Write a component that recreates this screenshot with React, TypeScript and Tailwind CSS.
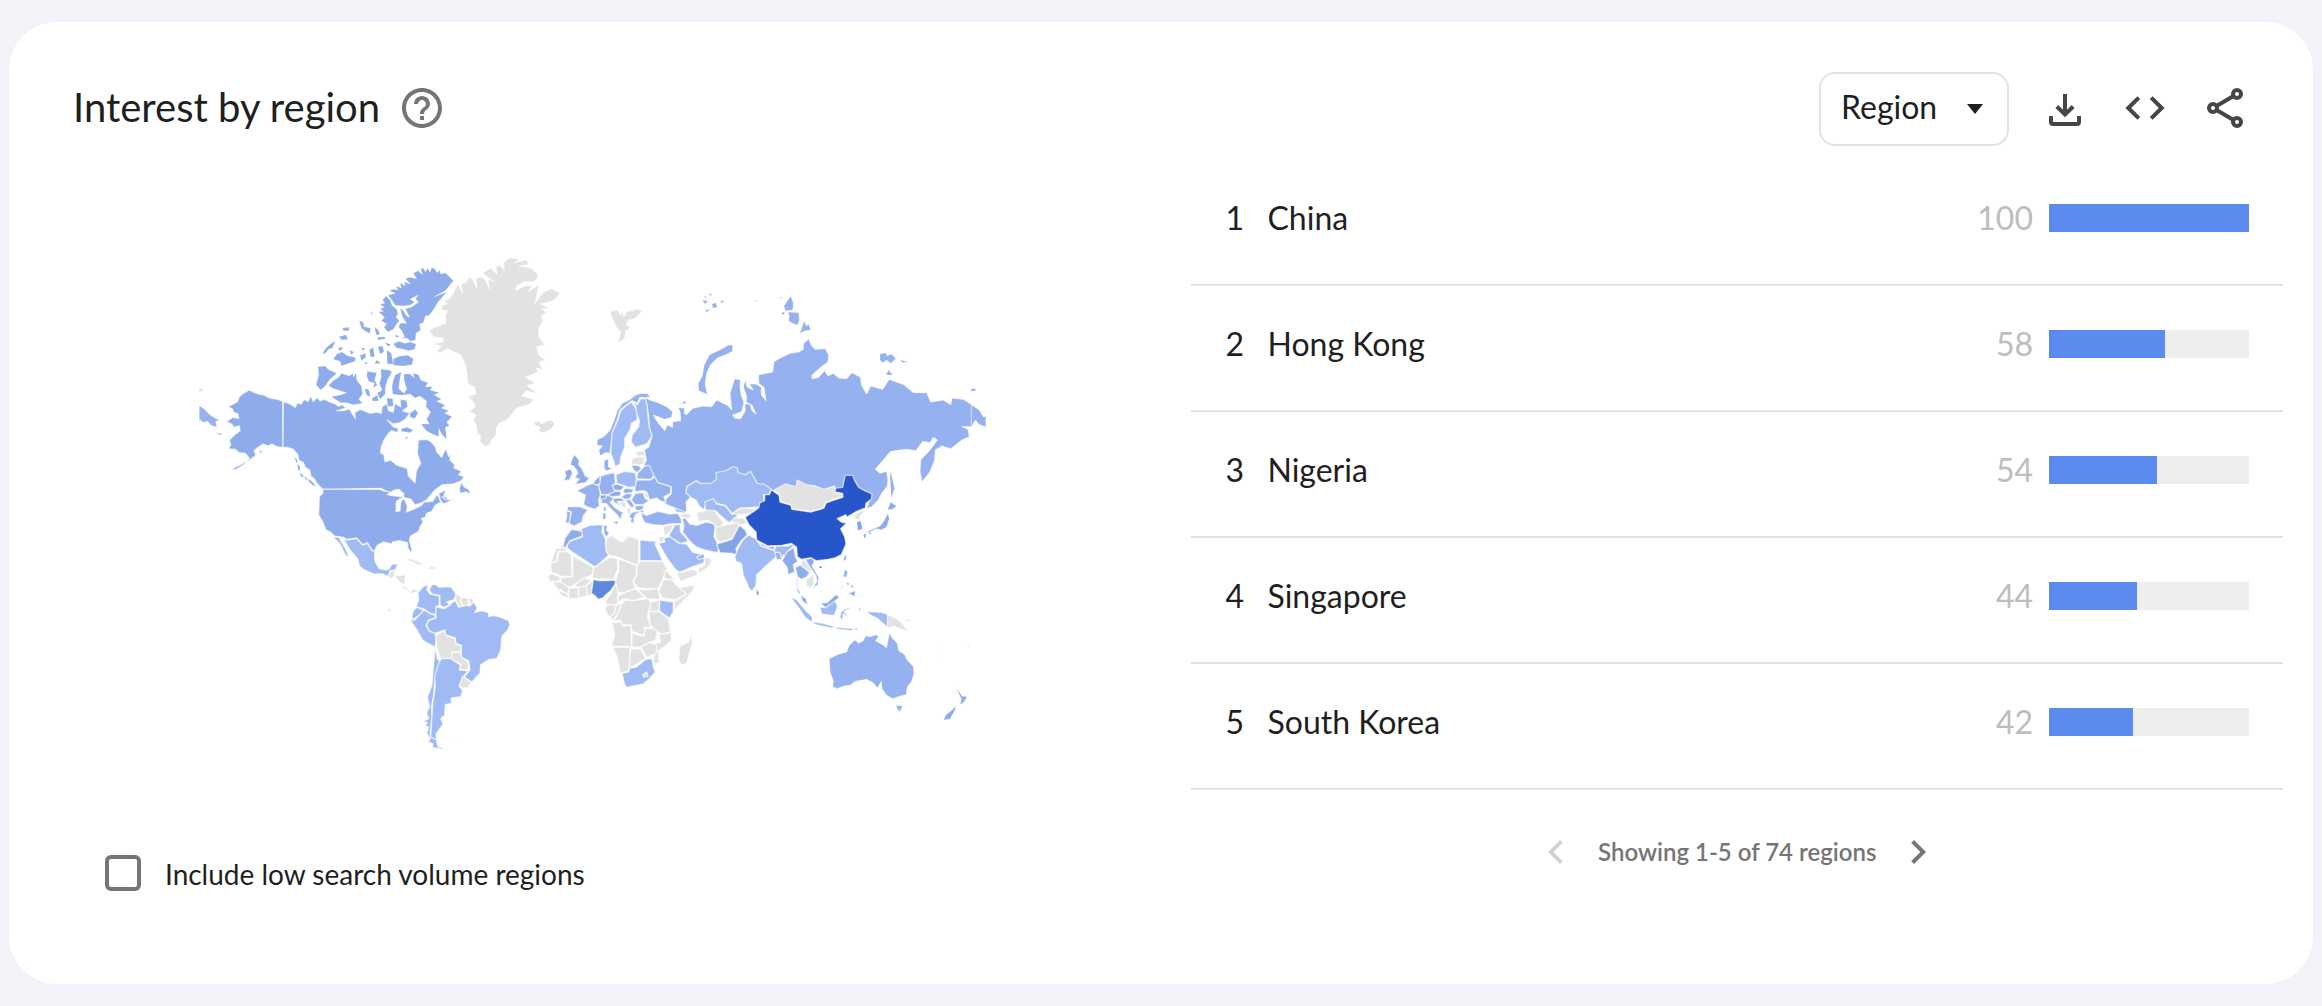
import { useState } from 'react';

type RegionRow = {
  rank: number;
  name: string;
  value: number;
};

type MapShape = {
  name: string;
  fill: string;
  d: string;
};

type MapArea = {
  id: string;
  offset: [number, number];
  border: number;
  shapes: MapShape[];
};

const ROWS: RegionRow[] = [
  { rank: 1, name: 'China', value: 100 },
  { rank: 2, name: 'Hong Kong', value: 58 },
  { rank: 3, name: 'Nigeria', value: 54 },
  { rank: 4, name: 'Singapore', value: 44 },
  { rank: 5, name: 'South Korea', value: 42 },
];

const NONE = '#e2e2e2';
const PALE = '#a0baf3';
const LIGHT = '#95b1ef';
const MEDIUM = '#8eacec';
const STRONG = '#84a4e8';
const NIGERIA = '#5f8adb';
const PEAK = '#2656c9';

const AREAS: MapArea[] = [
  {
    id: 'canada',
    offset: [0, 0],
    border: 4,
    shapes: [
      {
        name: 'Canada',
        fill: MEDIUM,
        d: 'M310 484L330 492L346 502L352 488L364 492L372 478L384 484L392 468L400 484L412 472L420 482L434 478L450 486L462 490L476 498L488 494L498 504L480 510L470 512L492 512L508 506L516 520L526 536L524 518L540 508L552 512L570 520L590 516L604 520L606 500L620 490L626 512L640 516L644 490L662 500L660 478L680 480L684 500L668 512L690 520L676 538L660 548L640 552L622 540L640 560L656 566L652 578L634 572L624 582L612 600L604 620L602 638L612 644L615 665L632 660L650 675L682 685L685 708L705 728L708 700L710 690L722 670L712 640L715 600L740 598L752 604L766 620L770 635L785 652L790 640L798 625L806 650L812 640L810 660L825 675L822 684L836 690L845 695L836 704L852 710L845 722L820 732L785 735L765 750L740 780L725 788L700 800L680 815L685 805L700 790L692 778L670 772L652 750L630 765L622 755L602 745L428 748L410 730L404 718L392 708L390 692L376 682L370 668L356 660L354 645L340 628L322 622L308 622Z',
      },
      {
        name: 'Alaska',
        fill: MEDIUM,
        d: 'M308 484L290 477L268 474L252 465L238 463L222 457L208 450L190 460L178 470L172 485L160 492L144 500L158 508L160 516L174 522L176 535L158 532L140 545L156 553L160 562L178 558L180 572L162 586L148 600L152 615L145 626L165 628L178 638L196 640L208 655L200 668L228 645L222 632L240 618L250 612L262 618L276 612L290 620L308 622ZM200 660L186 672L165 682L150 692L170 688L192 674ZM236 632l12 0l-6 10Z',
      },
      {
        name: 'Far east tip',
        fill: LIGHT,
        d: 'M57 495L75 508L88 522L108 535L120 540L108 545L112 562L95 558L82 545L70 548L60 540L57 552ZM57 445l14 4l-12 6Z',
      },
    ],
  },
  {
    id: 'arctic',
    offset: [0, 0],
    border: 1,
    shapes: [
      {
        name: 'Ellesmere',
        fill: MEDIUM,
        d: 'M820 122L808 110L796 98L782 102L780 90L772 98L764 86L755 83L750 96L742 84L736 96L730 84L722 88L728 104L714 92L700 100L710 116L690 112L676 116L692 132L672 126L676 138L660 128L664 144L648 138L654 150L640 148L628 152L646 160L624 166L634 178L646 196L668 198L690 196L704 186L690 178L716 164L706 176L716 186L694 202L676 206L684 222L690 232L680 228L668 210L660 206L668 232L680 250L660 250L656 262L664 270L674 290L664 292L684 296L690 304L706 300L708 280L722 270L718 252L730 248L736 228L748 226L762 206L774 186L790 168L800 156L770 168L762 170L796 152Z',
      },
      {
        name: 'Axel Heiberg',
        fill: MEDIUM,
        d: 'M618 168L630 180L636 196L650 208L654 222L648 232L658 242L650 252L640 268L624 276L612 262L620 252L604 242L614 232L596 216L610 214L600 206L612 202L600 192L614 190L608 180Z',
      },
      {
        name: 'Arctic islands',
        fill: MEDIUM,
        d: 'M640 312L656 304L676 310L690 306L708 312L704 328L686 332L664 326L650 324ZM640 356L660 348L684 346L700 356L696 374L670 378L640 376ZM620 330L634 340L640 372L622 372ZM594 320L608 318L612 336L600 342ZM538 242L550 246L552 260L572 264L570 280L556 274L544 264ZM584 260L596 272L600 284L588 284ZM488 264L506 262L508 272L490 272ZM476 290l22 -6l6 14l-18 2ZM428 338L440 322L452 312L466 302L458 324L446 328L434 342ZM460 358L470 342L486 336L504 348L526 352L526 364L500 372L484 378L480 364ZM540 346L556 340L558 352L544 362ZM568 330L580 322L584 350L572 352ZM584 372L590 360L602 370ZM508 330l14 6l-8 8ZM592 292l20 -2l6 6l-24 4ZM572 212l6 8l-4 4ZM614 308l18 4l-6 8ZM546 322l10 4l-10 6ZM644 284l14 4l-8 6ZM474 324l12 -4l2 8l-10 4ZM554 366l10 2l-6 6ZM108 578l20 3l-8 4Z',
      },
      {
        name: 'Banks',
        fill: MEDIUM,
        d: 'M414 380L436 378L444 388L470 400L448 420L436 438L422 450L408 434L416 406Z',
      },
      {
        name: 'Victoria',
        fill: MEDIUM,
        d: 'M484 400L508 408L518 400L520 412L528 398L530 420L544 438L548 462L536 478L548 490L520 494L500 488L482 488L454 470L484 464L500 458L480 452L456 444L446 436L462 420L476 412Z',
      },
      {
        name: 'Somerset',
        fill: MEDIUM,
        d: 'M602 388L626 390L636 396L624 416L616 440L616 462L600 478L592 460L606 450L598 430L604 410ZM562 394L590 398L584 420L592 436L578 444L584 430L566 424L560 408ZM554 446l12 2l6 22l-12 -4ZM576 474l16 -8l4 16l-18 2Z',
      },
      {
        name: 'Baffin',
        fill: MEDIUM,
        d: 'M646 404L664 396L660 416L656 446L672 460L680 448L672 420L672 402L690 402L704 414L698 400L716 404L722 420L744 428L736 440L758 440L750 450L778 458L762 464L784 478L770 484L796 496L784 504L806 512L794 520L816 530L800 546L808 558L796 562L800 598L786 584L776 564L776 590L752 580L736 570L724 552L748 552L740 538L752 516L738 500L740 484L720 468L706 474L690 462L664 466L638 462L636 440L640 420ZM690 520L706 508L714 520L704 536L690 530ZM664 566L680 562L700 570L690 578L664 574ZM676 590l8 2l-6 6ZM620 474L638 476L640 498L624 500Z',
      },
      {
        name: 'Pacific coast',
        fill: MEDIUM,
        d: 'M344 652l6 4l4 14l-6 -4ZM352 672l8 6l0 16l-6 -6ZM358 698l8 4l6 10l-8 -2ZM374 708l8 8l0 6l-8 -8ZM386 716l14 12l8 12l-10 -4l-12 -12Z',
      },
      {
        name: 'Svalbard',
        fill: NONE,
        d: 'M1290 216L1312 210L1322 226L1326 214L1332 232L1340 216L1372 208L1386 214L1362 236L1344 240L1338 256L1350 262L1336 274L1334 294L1316 308L1322 276L1308 258L1298 236Z',
      },
    ],
  },
  {
    id: 'greenland',
    offset: [540, 0],
    border: 2,
    shapes: [
      {
        name: 'Greenland',
        fill: NONE,
        d: 'M285 146L296 134L308 162L304 130L316 128L330 112L336 116L352 148L348 118L360 110L374 118L390 150L384 118L404 126L368 100L392 84L412 104L408 80L420 76L434 92L430 70L440 60L450 54L478 58L462 68L500 60L506 74L476 78L512 84L530 100L534 112L520 126L494 124L470 138L466 152L490 140L516 136L504 156L536 134L532 156L524 192L548 158L574 146L600 158L586 178L566 186L540 192L568 204L544 206L560 220L544 226L548 246L536 262L536 290L554 314L530 320L536 345L556 360L536 366L548 388L530 384L532 396L520 402L496 412L526 430L500 436L530 460L498 452L484 468L520 478L510 492L470 504L456 522L440 540L418 548L408 566L408 584L394 600L390 612L376 620L360 604L362 586L352 580L350 560L340 540L348 524L330 514L346 500L342 486L324 470L348 462L344 440L324 432L322 410L318 380L304 346L290 338L262 326L240 338L230 332L246 318L220 312L250 306L248 294L222 290L208 274L220 264L258 250L256 226L264 212L246 210L246 196L262 192L252 184L268 176L280 160Z',
      },
      {
        name: 'Iceland',
        fill: NONE,
        d: 'M520 546L536 544L546 552L560 544L574 540L584 552L574 566L552 578L534 572L542 562L526 556Z',
      },
    ],
  },
  {
    id: 'americas',
    offset: [300, 600],
    border: 4,
    shapes: [
      {
        name: 'United States',
        fill: MEDIUM,
        d: 'M128 148L302 148L308 152L328 156L340 160L352 150L372 172L360 176L348 190L352 214L360 212L360 186L372 176L388 182L392 195L380 215L400 208L424 196L432 186L458 184L472 162L482 186L466 196L456 214L440 220L436 232L424 236L430 245L420 262L416 274L392 288L388 300L396 330L394 340L384 325L382 308L358 302L338 306L334 312L310 306L292 316L284 332L276 330L262 308L248 314L230 294L200 298L190 292L162 288L152 276L138 270L128 245L116 225L118 170L128 160Z',
      },
      {
        name: 'Great Lakes',
        fill: '#ffffff',
        d: 'M322 164L340 152L356 148L372 162L368 170L346 168ZM350 184L364 176L358 212L348 214ZM372 174L392 178L404 194L424 192L380 216L382 198Z',
      },
      {
        name: 'Atlantic Canada',
        fill: MEDIUM,
        d: 'M476 160L498 150L492 166L506 180L524 178L500 188L490 192L482 182ZM545 125L552 140L568 150L572 165L560 156L540 160L538 145ZM486 170l14 2l8 8l-14 -2Z',
      },
      {
        name: 'Mexico',
        fill: PALE,
        d: 'M162 290L190 294L200 300L230 296L248 316L262 310L276 332L284 334L284 362L298 386L320 390L328 386L336 372L354 372L346 390L330 392L326 410L310 402L282 402L250 388L238 378L234 358L210 330L190 296L178 294L196 325L208 352L196 345L180 312L164 296Z',
      },
      {
        name: 'Central America',
        fill: NONE,
        d: 'M326 410L330 394L345 392L343 408L332 416ZM343 408L376 404L374 436L360 428ZM362 440L374 438L392 455L400 446L416 452L412 456L394 460ZM372 360L390 356L412 363L432 375L415 375L395 364ZM440 386L455 379L472 384L458 389ZM526 892l16 1l-8 5Z',
      },
      {
        name: 'Colombia',
        fill: PALE,
        d: 'M418 452L432 438L446 436L440 448L450 462L478 468L478 496L468 500L468 524L450 520L430 506L408 500L416 480L414 460Z',
      },
      {
        name: 'Venezuela',
        fill: PALE,
        d: 'M448 448L456 434L468 434L476 442L500 440L514 442L524 456L530 462L520 480L500 486L510 494L492 502L480 496L480 466L456 462Z',
      },
      { name: 'Guyana', fill: NONE, d: 'M526 460L544 470L540 484L548 498L536 500L528 484Z' },
      { name: 'Suriname', fill: NONE, d: 'M544 472L564 474L566 494L550 496L542 484ZM566 474L580 476L580 488L570 496Z' },
      { name: 'Ecuador', fill: PALE, d: 'M400 512L410 502L430 510L420 524L408 532L400 540L396 528Z' },
      {
        name: 'Peru',
        fill: PALE,
        d: 'M396 534L402 542L412 532L432 510L452 522L466 526L466 534L446 540L438 556L448 574L464 578L468 596L466 622L440 608L428 600L412 572L394 545Z',
      },
      {
        name: 'Brazil',
        fill: PALE,
        d: 'M580 486L592 504L584 518L604 512L626 518L626 530L640 526L662 532L686 542L690 554L682 572L666 588L662 630L650 656L628 658L602 674L600 700L588 712L576 726L552 712L570 690L566 662L544 652L544 616L528 610L526 594L496 584L494 570L464 580L448 572L440 556L446 542L468 534L468 500L492 506L510 496L516 488L526 482L536 502L558 496L570 498Z',
      },
      {
        name: 'Bolivia',
        fill: NONE,
        d: 'M468 586L494 572L498 586L524 596L528 612L544 618L542 636L516 636L514 656L500 656L482 656L476 640L470 622Z',
      },
      {
        name: 'Chile',
        fill: PALE,
        d: 'M466 622L472 656L480 664L470 700L464 730L460 770L454 800L456 830L450 880L456 892L470 900L476 926L456 922L460 912L444 905L452 896L440 880L446 862L436 856L442 848L430 844L446 836L440 818L448 800L442 770L456 736L460 680Z',
      },
      {
        name: 'Argentina',
        fill: PALE,
        d: 'M484 656L514 656L542 676L538 690L560 692L568 688L552 708L538 738L548 752L542 770L514 774L514 790L496 794L494 826L482 836L490 852L468 882L472 912L492 930L478 926L470 900L452 890L456 830L458 790L466 740L464 710L476 670Z',
      },
      {
        name: 'Paraguay',
        fill: NONE,
        d: 'M516 638L540 636L546 654L564 664L566 684L558 690L538 688L544 674L514 656Z',
      },
      { name: 'Uruguay', fill: NONE, d: 'M548 708L574 728L564 744L546 744L538 736Z' },
      { name: 'Galapagos', fill: MEDIUM, d: 'M324 506l8 4l-4 6Z' },
    ],
  },
  {
    id: 'russia',
    offset: [1560, 120],
    border: 3,
    shapes: [
      {
        name: 'Russia',
        fill: LIGHT,
        d: 'M-165 352L-150 360L-125 368L-100 380L-82 395L-85 412L-106 418L-140 405L-126 428L-106 452L-98 435L-82 442L-82 425L-58 422L-60 395L-66 382L-45 385L-48 400L-40 404L-22 385L0 380L10 378L35 380L50 360L85 378L95 390L90 340L104 296L122 300L120 320L124 345L132 368L125 395L98 405L105 415L122 416L136 392L134 372L150 372L156 392L168 402L156 376L138 366L140 350L130 320L136 300L142 322L160 330L148 312L168 312L184 322L184 345L198 362L192 322L176 310L176 284L218 276L222 245L240 234L270 220L296 216L310 208L310 192L326 176L334 196L345 208L376 206L386 225L384 246L362 262L336 285L336 296L356 292L374 272L384 288L400 280L416 294L440 296L456 278L482 292L484 315L500 342L512 318L548 328L568 298L612 314L640 338L680 338L692 366L730 360L752 374L756 354L790 358L812 372L838 390L850 410L858 408L858 442L838 434L826 420L816 440L786 440L804 448L808 470L786 480L752 506L726 498L706 510L704 540L690 575L666 606L660 575L662 540L690 510L712 480L700 472L690 488L668 484L648 512L620 508L572 514L526 568L540 580L560 574L564 600L562 618L545 640L535 660L515 680L500 686L516 642L400 650L218 632L100 640L0 610L-10 602L-40 620L-42 638L-28 650L-42 665L-40 690L-45 700L-80 682L-108 670L-100 655L-86 642L-86 620L-125 608L-138 590L-150 570L-170 558L-160 540L-168 510L-154 502L-144 470L-152 440L-154 410L-158 380Z',
      },
      {
        name: 'Novaya Zemlya',
        fill: LIGHT,
        d: 'M98 194L84 196L58 210L28 224L12 256L6 290L-6 310L-4 332L22 344L16 312L20 280L32 254L52 234L78 224L98 214Z',
      },
      { name: 'Date line', fill: 'none', d: 'M814 372L814 438' },
    ],
  },
  {
    id: 'russian-islands',
    offset: [1560, 120],
    border: 1,
    shapes: [
      {
        name: 'Northern islands',
        fill: LIGHT,
        d: 'M36 72l12 -4l4 14l-14 2ZM60 66l12 -6l-4 10ZM6 60l18 4l-8 8ZM14 92l16 -6l-8 10ZM28 40l8 4l-6 4ZM12 48l8 2l-4 4ZM264 60L272 48L280 70L278 90L256 92L252 78ZM264 96L296 98L298 120L292 136L266 124L268 108ZM300 160L312 124L320 138L326 132L332 150L314 152ZM242 98l12 -2l-2 10ZM238 52l8 0l-4 4ZM166 62l6 0l-4 4ZM540 222L556 218L562 228L574 222L588 236L572 250L560 240L548 248L540 240ZM600 238l10 4l14 4l-16 2ZM558 284l8 -14l12 16ZM810 330l14 -6l4 8l-12 2ZM572 574L578 600L584 625L574 655L572 620L570 590ZM-52 366l8 -2l2 6l-10 2Z',
      },
    ],
  },
  {
    id: 'europe',
    offset: [1050, 390],
    border: 4,
    shapes: [
      {
        name: 'Norway',
        fill: LIGHT,
        d: 'M240 250L228 248L210 258L206 240L216 228L200 226L202 208L220 200L240 180L252 150L262 120L276 100L300 88L314 76L330 70L352 70L362 80L345 84L330 82L322 100L306 92L290 104L270 120L262 150L246 190L244 220Z',
      },
      {
        name: 'Sweden',
        fill: PALE,
        d: 'M246 188L264 150L272 122L290 106L304 96L320 120L322 150L304 160L300 180L284 205L284 232L272 262L270 282L256 290L250 270L242 250L244 220Z',
      },
      {
        name: 'Finland',
        fill: PALE,
        d: 'M306 96L322 104L332 86L346 86L352 110L354 140L358 172L366 198L350 222L316 232L304 216L306 196L326 170L328 152L320 130L318 110Z',
      },
      { name: 'Denmark', fill: LIGHT, d: 'M222 272L236 264L236 290L248 296L228 304L222 294Z' },
      { name: 'Baltics', fill: NONE, d: 'M318 246L344 242L344 256L320 258ZM306 268L318 262L342 260L344 282L328 284L304 282Z' },
      { name: 'Lithuania', fill: LIGHT, d: 'M304 286L326 286L334 296L322 308L310 300Z' },
      { name: 'Belarus', fill: LIGHT, d: 'M324 308L336 296L344 288L358 286L372 318L362 328L320 326Z' },
      { name: 'Poland', fill: PALE, d: 'M258 314L282 304L316 308L320 332L316 350L296 352L280 346L260 340Z' },
      { name: 'Germany', fill: LIGHT, d: 'M212 318L230 312L254 308L256 340L248 348L256 362L240 374L214 374L206 350Z' },
      { name: 'Benelux', fill: MEDIUM, d: 'M196 330L210 316L210 340L200 346L188 342Z' },
      {
        name: 'France',
        fill: LIGHT,
        d: 'M206 348L212 376L206 388L208 408L196 418L176 412L160 404L166 376L140 362L160 352L172 346L188 340Z',
      },
      { name: 'Spain', fill: LIGHT, d: 'M112 410L150 410L174 420L160 438L156 456L132 468L116 460L124 426L112 420Z' },
      { name: 'Portugal', fill: LIGHT, d: 'M110 422L122 426L118 458L106 460L110 440Z' },
      {
        name: 'United Kingdom',
        fill: MEDIUM,
        d: 'M134 254L148 270L146 284L156 296L166 318L178 324L168 338L134 343L148 328L134 322L144 308L132 290L120 284L128 262Z',
      },
      { name: 'Ireland', fill: MEDIUM, d: 'M104 304L122 296L128 310L118 330L100 332L108 318Z' },
      {
        name: 'Italy',
        fill: LIGHT,
        d: 'M214 384L230 376L248 380L248 392L240 396L256 414L280 428L276 434L272 450L262 436L246 420L228 400L214 400ZM246 456l20 -4l-4 12ZM218 430l10 -2l0 18l-10 4ZM220 410h8v14h-7Z',
      },
      { name: 'Switzerland', fill: MEDIUM, d: 'M210 376L230 374L228 384L212 390Z' },
      { name: 'Austria', fill: MEDIUM, d: 'M232 374L256 364L274 364L270 378L246 380Z' },
      { name: 'Czechia', fill: MEDIUM, d: 'M246 346L262 342L284 350L270 362L254 360Z' },
      { name: 'Slovakia', fill: LIGHT, d: 'M278 362L288 354L312 358L306 368L282 370Z' },
      { name: 'Hungary', fill: LIGHT, d: 'M274 380L290 370L308 372L300 386L282 388Z' },
      {
        name: 'Ukraine',
        fill: LIGHT,
        d: 'M314 356L320 330L362 330L374 320L384 338L422 350L422 370L402 380L408 398L390 392L380 384L358 390L350 366L336 362L316 366Z',
      },
      { name: 'Romania', fill: LIGHT, d: 'M304 390L316 370L340 368L346 386L358 392L340 404L316 404Z' },
      { name: 'Moldova', fill: NONE, d: 'M340 362L352 370L356 384L346 382Z' },
      { name: 'Serbia', fill: LIGHT, d: 'M286 390L300 388L314 408L304 414Z' },
      { name: 'Croatia', fill: LIGHT, d: 'M246 384L274 384L284 392L262 396L278 414L252 396Z' },
      { name: 'Balkans', fill: NONE, d: 'M264 396L284 394L290 412L280 412ZM290 414L304 416L300 436L292 430Z' },
      { name: 'Bulgaria', fill: LIGHT, d: 'M314 408L342 406L338 420L318 422Z' },
      { name: 'Greece', fill: LIGHT, d: 'M296 440L304 428L318 424L336 424L318 432L312 444L312 460L300 456L304 446Z' },
      {
        name: 'Turkey',
        fill: LIGHT,
        d: 'M334 428L350 436L384 424L420 432L444 430L452 444L456 460L420 462L400 466L370 464L344 458L336 442ZM324 424L340 420L342 430Z',
      },
      { name: 'Georgia', fill: LIGHT, d: 'M430 412L460 424L466 430L440 426Z' },
      { name: 'Caucasus', fill: NONE, d: 'M448 434L468 430L486 434L478 446L456 442Z' },
      { name: 'Tunisia', fill: LIGHT, d: 'M220 466L232 466L230 480L238 490L228 502L222 490Z' },
      { name: 'Morocco', fill: MEDIUM, d: 'M82 532L100 528L104 506L124 478L156 484L158 498L120 512L108 532Z' },
      {
        name: 'Algeria',
        fill: PALE,
        d: 'M112 534L112 524L120 514L158 500L154 476L180 466L218 464L216 486L226 506L232 548L236 556L196 592L130 548Z',
      },
      { name: 'Syria', fill: NONE, d: 'M400 468L432 464L420 486L402 498ZM386 500L404 500L400 514L388 516Z' },
      { name: 'Iraq', fill: PALE, d: 'M420 490L434 466L450 462L452 486L472 508L472 516L450 520L418 500Z' },
      {
        name: 'Iran',
        fill: LIGHT,
        d: 'M456 446L466 444L480 462L500 466L528 456L556 462L552 500L568 530L562 548L524 540L498 530L480 514L458 486L462 466Z',
      },
      {
        name: 'Saudi Arabia',
        fill: PALE,
        d: 'M386 520L404 516L402 504L420 500L446 520L470 522L488 546L522 556L522 578L488 590L450 606L440 602L412 566Z',
      },
    ],
  },
  {
    id: 'africa',
    offset: [1050, 810],
    border: 4,
    shapes: [
      { name: 'Yemen', fill: NONE, d: 'M440 190L490 178L504 186L500 196L452 214Z' },
      { name: 'Oman', fill: NONE, d: 'M504 178L524 166L524 140L546 148L536 170L508 190Z' },
      { name: 'United Arab Emirates', fill: MEDIUM, d: 'M500 142L522 130L522 144L506 148Z' },
      { name: 'Egypt', fill: PALE, d: 'M330 90L376 94L382 104L374 100L398 152L330 152Z' },
      {
        name: 'Libya',
        fill: NONE,
        d: 'M232 82L244 76L268 92L276 96L296 78L326 88L326 164L316 164L266 142L238 136L228 122L226 100Z',
      },
      { name: 'Western Sahara', fill: NONE, d: 'M62 158L78 116L108 112L108 124L84 124L80 152Z' },
      { name: 'Mauritania', fill: NONE, d: 'M62 160L82 154L86 126L110 124L124 134L126 198L100 200L88 196L64 186Z' },
      { name: 'Mali', fill: NONE, d: 'M128 138L190 172L190 192L160 206L136 222L120 232L92 218L92 204L128 200Z' },
      { name: 'Niger', fill: NONE, d: 'M192 172L238 142L262 146L264 176L250 208L200 206L186 204Z' },
      { name: 'Chad', fill: NONE, d: 'M266 146L320 168L318 196L308 212L316 234L276 250L262 244L256 216L266 180Z' },
      { name: 'Sudan', fill: NONE, d: 'M322 166L330 154L398 154L412 176L398 208L384 236L352 236L322 232L310 214L320 196Z' },
      { name: 'South Sudan', fill: NONE, d: 'M322 238L352 240L384 236L390 268L352 268Z' },
      { name: 'Ethiopia', fill: NONE, d: 'M400 210L424 208L444 230L470 250L436 270L398 264L386 246Z' },
      { name: 'Eritrea', fill: NONE, d: 'M402 186L412 184L434 210L404 206Z' },
      { name: 'Somalia', fill: NONE, d: 'M446 232L494 226L488 244L434 300L432 276L470 252Z' },
      { name: 'Kenya', fill: PALE, d: 'M390 270L430 276L430 306L418 324L388 302Z' },
      { name: 'Senegal', fill: NONE, d: 'M60 190L88 200L90 214L60 214L54 202Z' },
      { name: 'Guinea', fill: NONE, d: 'M66 216L92 216L118 234L112 254L96 240L84 238Z' },
      { name: 'Ivory Coast', fill: NONE, d: 'M116 236L144 232L146 264L116 266Z' },
      { name: 'Ghana', fill: NONE, d: 'M146 230L168 228L172 258L146 264Z' },
      { name: 'Benin', fill: NONE, d: 'M168 228L188 212L186 254L172 258Z' },
      { name: 'Burkina Faso', fill: NONE, d: 'M136 224L162 204L184 210L168 228L140 232Z' },
      { name: 'Liberia', fill: NONE, d: 'M82 240L112 252L116 268L92 254Z' },
      { name: 'Cameroon', fill: NONE, d: 'M226 276L248 240L258 218L264 252L262 284L230 284Z' },
      { name: 'Nigeria', fill: NIGERIA, d: 'M190 208L206 212L226 212L256 210L256 222L242 242L226 256L218 264L204 268L196 258L184 250Z' },
      { name: 'Central African Republic', fill: NONE, d: 'M264 260L276 252L316 236L344 262L310 272L282 266L266 276Z' },
      { name: 'Gabon', fill: NONE, d: 'M224 300L232 284L258 286L252 310L240 322Z' },
      { name: 'Congo', fill: NONE, d: 'M258 288L274 278L262 314L248 332L240 322L254 308Z' },
      {
        name: 'DR Congo',
        fill: NONE,
        d: 'M286 270L310 272L356 266L362 280L352 320L362 352L344 352L342 376L306 364L302 344L276 344L272 332L250 332L262 316L274 284Z',
      },
      { name: 'Uganda', fill: NONE, d: 'M362 276L388 270L388 302L358 306Z' },
      { name: 'Tanzania', fill: NONE, d: 'M358 306L388 304L416 328L422 366L396 372L380 364L360 344Z' },
      { name: 'Angola', fill: NONE, d: 'M246 338L272 336L278 348L302 346L304 368L304 410L244 408L254 374Z' },
      { name: 'Zambia', fill: NONE, d: 'M306 370L342 378L346 354L378 358L382 372L376 390L356 398L330 412L306 410Z' },
      {
        name: 'Mozambique',
        fill: NONE,
        d: 'M386 374L424 368L424 392L398 414L384 422L388 456L372 464L370 446L380 420L376 400L392 396Z',
      },
      { name: 'Zimbabwe', fill: NONE, d: 'M332 412L358 398L380 404L378 432L350 442Z' },
      { name: 'Botswana', fill: NONE, d: 'M302 416L332 418L348 446L320 462L298 474Z' },
      { name: 'Namibia', fill: NONE, d: 'M246 412L300 412L298 470L296 484L270 488L262 440Z' },
      {
        name: 'South Africa',
        fill: PALE,
        d: 'M276 490L296 486L300 474L318 472L348 448L366 446L370 470L376 486L358 506L340 522L290 532L284 524Z',
      },
      { name: 'Lesotho', fill: NONE, d: 'M338 494L350 486L354 498L342 502Z' },
      { name: 'Madagascar', fill: NONE, d: 'M482 378L488 396L470 460L454 466L446 448L450 408L476 396Z' },
    ],
  },
  {
    id: 'asia',
    offset: [1560, 600],
    border: 4,
    shapes: [
      {
        name: 'Kazakhstan',
        fill: PALE,
        d: 'M-42 158L-40 140L-10 122L0 130L34 130L50 118L48 98L78 92L100 80L112 84L114 98L136 104L152 94L172 130L192 132L214 148L206 164L190 164L192 184L178 200L116 206L98 222L76 196L50 190L36 178L18 192L12 210L-2 198L-12 180L-28 172Z',
      },
      { name: 'Turkmenistan', fill: NONE, d: 'M-10 218L14 212L32 206L46 216L72 250L52 266L40 250L20 240L-4 246Z' },
      { name: 'Uzbekistan', fill: PALE, d: 'M14 186L40 176L50 192L76 198L96 224L116 210L118 220L94 246L84 246L46 212L16 210Z' },
      { name: 'Kyrgyzstan', fill: NONE, d: 'M98 220L120 204L170 206L150 222L110 224Z' },
      { name: 'Tajikistan', fill: NONE, d: 'M94 244L104 232L134 236L140 252L112 254Z' },
      { name: 'Afghanistan', fill: NONE, d: 'M46 262L74 256L112 248L118 258L96 296L60 306L48 296Z' },
      {
        name: 'Pakistan',
        fill: STRONG,
        d: 'M50 312L96 298L118 256L136 270L142 284L124 302L108 326L112 346L96 340L60 338Z',
      },
      {
        name: 'India',
        fill: PALE,
        d: 'M104 350L112 330L126 304L146 284L166 296L184 318L222 332L228 318L262 318L290 310L268 330L256 352L250 344L244 360L240 340L222 356L200 376L170 404L168 436L156 454L148 446L130 406L124 370L108 364Z',
      },
      { name: 'Nepal', fill: STRONG, d: 'M172 304L204 320L224 320L222 330L186 318Z' },
      { name: 'Bangladesh', fill: LIGHT, d: 'M224 336L240 338L246 360L230 358Z' },
      {
        name: 'China',
        fill: PEAK,
        d: 'M135 232L176 204L180 188L194 182L194 164L208 164L214 150L226 158L238 166L240 186L274 196L276 208L332 216L372 204L378 188L428 172L428 160L404 156L408 144L428 142L432 122L436 106L458 106L464 122L476 142L494 152L516 162L514 178L498 190L496 204L470 214L440 232L438 224L412 236L424 246L440 250L422 266L434 290L438 312L424 344L404 354L384 358L350 362L330 354L304 358L292 350L290 322L274 310L246 316L204 318L170 300L168 276L148 256Z',
      },
      {
        name: 'Mongolia',
        fill: NONE,
        d: 'M222 150L256 132L288 140L292 120L318 134L346 138L372 148L404 138L404 158L426 162L428 170L404 176L376 190L370 204L332 214L276 206L272 194L242 184L238 164Z',
      },
      { name: 'North Korea', fill: NONE, d: 'M462 226L492 206L490 220L478 230L484 240L466 238Z' },
      { name: 'Myanmar', fill: MEDIUM, d: 'M246 362L262 334L282 322L286 350L294 364L280 374L284 396L264 404L262 384Z' },
      {
        name: 'Thailand',
        fill: MEDIUM,
        d: 'M286 382L304 374L330 398L318 412L304 418L292 410L292 440L300 456L294 456L288 430L292 408Z',
      },
      { name: 'Laos', fill: NONE, d: 'M304 362L316 360L340 396L326 394L304 378Z' },
      { name: 'Cambodia', fill: NONE, d: 'M318 420L340 404L344 430L330 446L320 436Z' },
      {
        name: 'Vietnam',
        fill: MEDIUM,
        d: 'M316 358L336 354L344 364L336 378L356 410L354 434L338 446L350 424L348 408L326 376Z',
      },
    ],
  },
  {
    id: 'pacific',
    offset: [1560, 600],
    border: 2,
    shapes: [
      { name: 'Sri Lanka', fill: MEDIUM, d: 'M170 446l8 14l-4 8l-6 -8Z' },
      { name: 'Hainan', fill: PEAK, d: 'M357 380l8 -2l0 6l-6 0Z' },
      { name: 'Taiwan', fill: LIGHT, d: 'M430 358l6 -14l4 6l-4 14Z' },
      { name: 'South Korea', fill: STRONG, d: 'M470 246L482 242L488 266L474 272Z' },
      {
        name: 'Japan',
        fill: MEDIUM,
        d: 'M564 220L568 236L560 262L544 270L528 266L510 276L494 280L520 266L540 258L552 242ZM490 282l8 -2l0 14l-6 0ZM504 278l12 -2l-6 8ZM562 210L572 186L590 198L578 208Z',
      },
      {
        name: 'Malaysia',
        fill: MEDIUM,
        d: 'M302 466L318 476L322 494L308 484ZM288 444l12 14l-4 4ZM362 490L382 488L408 464L418 472L400 486L376 502Z',
      },
      {
        name: 'Indonesia',
        fill: PALE,
        d: 'M272 472L290 480L320 516L336 530L336 546L316 532L296 502ZM334 546L366 550L404 560L396 564L350 554ZM408 562l50 4l-2 6l-46 -6ZM360 502L376 504L404 484L412 498L402 526L366 522ZM424 516L434 508L456 502L432 514L444 532L430 520L426 542L420 530ZM500 516L520 516L546 518L562 524L562 560L548 548L532 534L514 526ZM476 500l6 8l-4 8ZM460 570l14 -8l-4 8Z',
      },
      {
        name: 'Philippines',
        fill: LIGHT,
        d: 'M430 410L434 388L444 396L438 412ZM446 460L466 452L464 470ZM440 426l10 6l-8 4ZM454 432l8 10l-10 0ZM418 450l12 -14l-2 6Z',
      },
      {
        name: 'Papua New Guinea',
        fill: NONE,
        d: 'M562 524L590 536L604 550L624 574L600 566L584 558L562 564ZM612 544l22 -8l-6 8ZM796 624l16 -10l-6 8ZM718 644l4 4l-4 2ZM726 604l6 4l-4 2Z',
      },
      {
        name: 'Australia',
        fill: LIGHT,
        d: 'M388 656L412 644L440 636L448 616L464 600L476 610L490 602L496 588L512 590L528 584L536 590L526 602L548 614L560 624L568 580L578 596L592 610L596 632L614 644L620 658L640 680L642 700L634 726L622 740L618 764L600 768L578 776L560 766L546 746L544 724L532 744L520 728L500 718L466 724L450 736L430 738L412 746L398 740L400 722L390 696ZM588 796L608 798L600 816L592 808Z',
      },
      {
        name: 'New Zealand',
        fill: MEDIUM,
        d: 'M768 742L780 758L786 768L802 770L790 788L780 794L784 778ZM768 796L764 812L750 838L730 840L738 824L756 810Z',
      },
    ],
  },
];

const WorldMap = () => (
  <svg viewBox="30 0 2460 1560" className="block w-full" role="img" aria-label="Interest by region map">
    {AREAS.map((area) => (
      <g
        key={area.id}
        transform={`translate(${area.offset[0]} ${area.offset[1]})`}
        stroke="#ffffff"
        strokeOpacity={0.65}
        strokeWidth={area.border}
        strokeLinejoin="round"
      >
        {area.shapes.map((shape) => (
          <path key={shape.name} d={shape.d} fill={shape.fill} />
        ))}
      </g>
    ))}
  </svg>
);

const HelpIcon = () => (
  <svg viewBox="0 0 24 24" className="size-12 fill-[#757575]" aria-hidden="true">
    <path d="M11 18h2v-2h-2v2zm1-16C6.48 2 2 6.48 2 12s4.48 10 10 10 10-4.48 10-10S17.52 2 12 2zm0 18c-4.41 0-8-3.59-8-8s3.59-8 8-8 8 3.59 8 8-3.59 8-8 8zm0-14c-2.21 0-4 1.79-4 4h2c0-1.1.9-2 2-2s2 .9 2 2c0 2-3 1.75-3 5h2c0-2.25 3-2.5 3-5 0-2.21-1.79-4-4-4z" />
  </svg>
);

const DownloadIcon = () => (
  <svg viewBox="0 0 48 48" className="size-12 fill-[#444746]" aria-hidden="true">
    <path d="M24 33.3l-9.6-9.4 2.9-2.9 4.7 4.7V10h4v15.7l4.7-4.7 2.9 2.9z" />
    <path d="M8 32v6a4 4 0 0 0 4 4h24a4 4 0 0 0 4-4v-6h-4v6H12v-6z" />
  </svg>
);

const EmbedIcon = () => (
  <svg viewBox="0 0 48 48" className="size-12 fill-[#444746]" aria-hidden="true">
    <path d="M16.4 12.2L4.4 24l12 11.8 2.8-2.8-9-9 9-9z" />
    <path d="M31.6 12.2l12 11.8-12 11.8-2.8-2.8 9-9-9-9z" />
  </svg>
);

const ShareIcon = () => (
  <svg viewBox="0 0 48 48" className="size-12 fill-none stroke-[#444746] stroke-4" aria-hidden="true">
    <circle cx="36" cy="10" r="4" />
    <circle cx="12" cy="24" r="4" />
    <circle cx="36" cy="38" r="4" />
    <path d="M15.5 22l17-10M15.5 26l17 10" />
  </svg>
);

const App = () => {
  const [resolution, setResolution] = useState('Region');
  const [includeLowVolume, setIncludeLowVolume] = useState(false);

  return (
    <div className="min-h-screen bg-[#f2f3f8] px-[9px] pt-[22px] pb-6 font-['Lato',sans-serif] text-[#1f1f1f]">
      <section className="rounded-[48px] bg-white pt-[50px] pb-[92px]">
        <header className="flex items-center justify-between px-16">
          <div className="flex items-center gap-[18px] pb-0.5">
            <h2 className="pb-0.5 text-[40px] leading-[48px]">Interest by region</h2>
            <button type="button" aria-label="Help">
              <HelpIcon />
            </button>
          </div>
          <div className="flex items-center gap-8">
            <div className="relative">
              <select
                aria-label="Resolution"
                value={resolution}
                onChange={(event) => setResolution(event.target.value)}
                className="h-[74px] w-[190px] appearance-none rounded-2xl border-2 border-[#e3e3e3] bg-white pb-1 pl-5 text-[32px]"
              >
                <option>Region</option>
                <option>City</option>
              </select>
              <svg viewBox="0 0 16 10" className="pointer-events-none absolute top-8 right-[26px] h-[10px] w-4" aria-hidden="true">
                <path d="M0 0h16L8 10z" fill="#1f1f1f" />
              </svg>
            </div>
            <div className="flex gap-8 pb-0.5">
              <button type="button" aria-label="Download CSV">
                <DownloadIcon />
              </button>
              <button type="button" aria-label="Embed">
                <EmbedIcon />
              </button>
              <button type="button" aria-label="Share">
                <ShareIcon />
              </button>
            </div>
          </div>
        </header>

        <div className="mt-[14px] grid grid-cols-[52fr_48fr] pr-[30px]">
          <div className="pt-20">
            <div className="mx-auto max-w-[820px]">
              <WorldMap />
            </div>
            <label className="mt-[94px] ml-24 flex w-fit items-center gap-6 text-[28px] leading-9">
              <input
                type="checkbox"
                checked={includeLowVolume}
                onChange={(event) => setIncludeLowVolume(event.target.checked)}
                className="size-9 appearance-none rounded-md border-4 border-[#757575] checked:bg-[#757575]"
              />
              <span className="pt-0.5">Include low search volume regions</span>
            </label>
          </div>

          <div>
            <ol>
              {ROWS.map((row) => (
                <li
                  key={row.rank}
                  className="flex h-[126px] items-center border-b-2 border-[#e3e3e3] pr-[34px] pb-2 pl-[34px] text-[32px] leading-10"
                >
                  <span className="w-[42px]">{row.rank}</span>
                  <span className="flex-1">{row.name}</span>
                  <span className="mr-4 text-[#bdbdbd]">{row.value}</span>
                  <div className="h-7 w-[200px] bg-[#eeeeee]">
                    <div className="h-full bg-[#5c8bf0]" style={{ width: `${row.value}%` }} />
                  </div>
                </li>
              ))}
            </ol>
            <nav className="mt-[38px] flex items-center justify-center gap-[18px]" aria-label="Regions pages">
              <button type="button" disabled aria-label="Previous">
                <svg viewBox="0 0 48 48" className="size-12 fill-[#d2d2d2]" aria-hidden="true">
                  <path d="M30.8 14.8L28 12 16 24l12 12 2.8-2.8-9.2-9.2z" />
                </svg>
              </button>
              <span className="text-2xl font-semibold text-[#757575]">Showing 1-5 of 74 regions</span>
              <button type="button" aria-label="Next">
                <svg viewBox="0 0 48 48" className="size-12 fill-[#757575]" aria-hidden="true">
                  <path d="M20 12l-2.8 2.8 9.2 9.2-9.2 9.2L20 36l12-12z" />
                </svg>
              </button>
            </nav>
          </div>
        </div>
      </section>
    </div>
  );
};

export default App;
